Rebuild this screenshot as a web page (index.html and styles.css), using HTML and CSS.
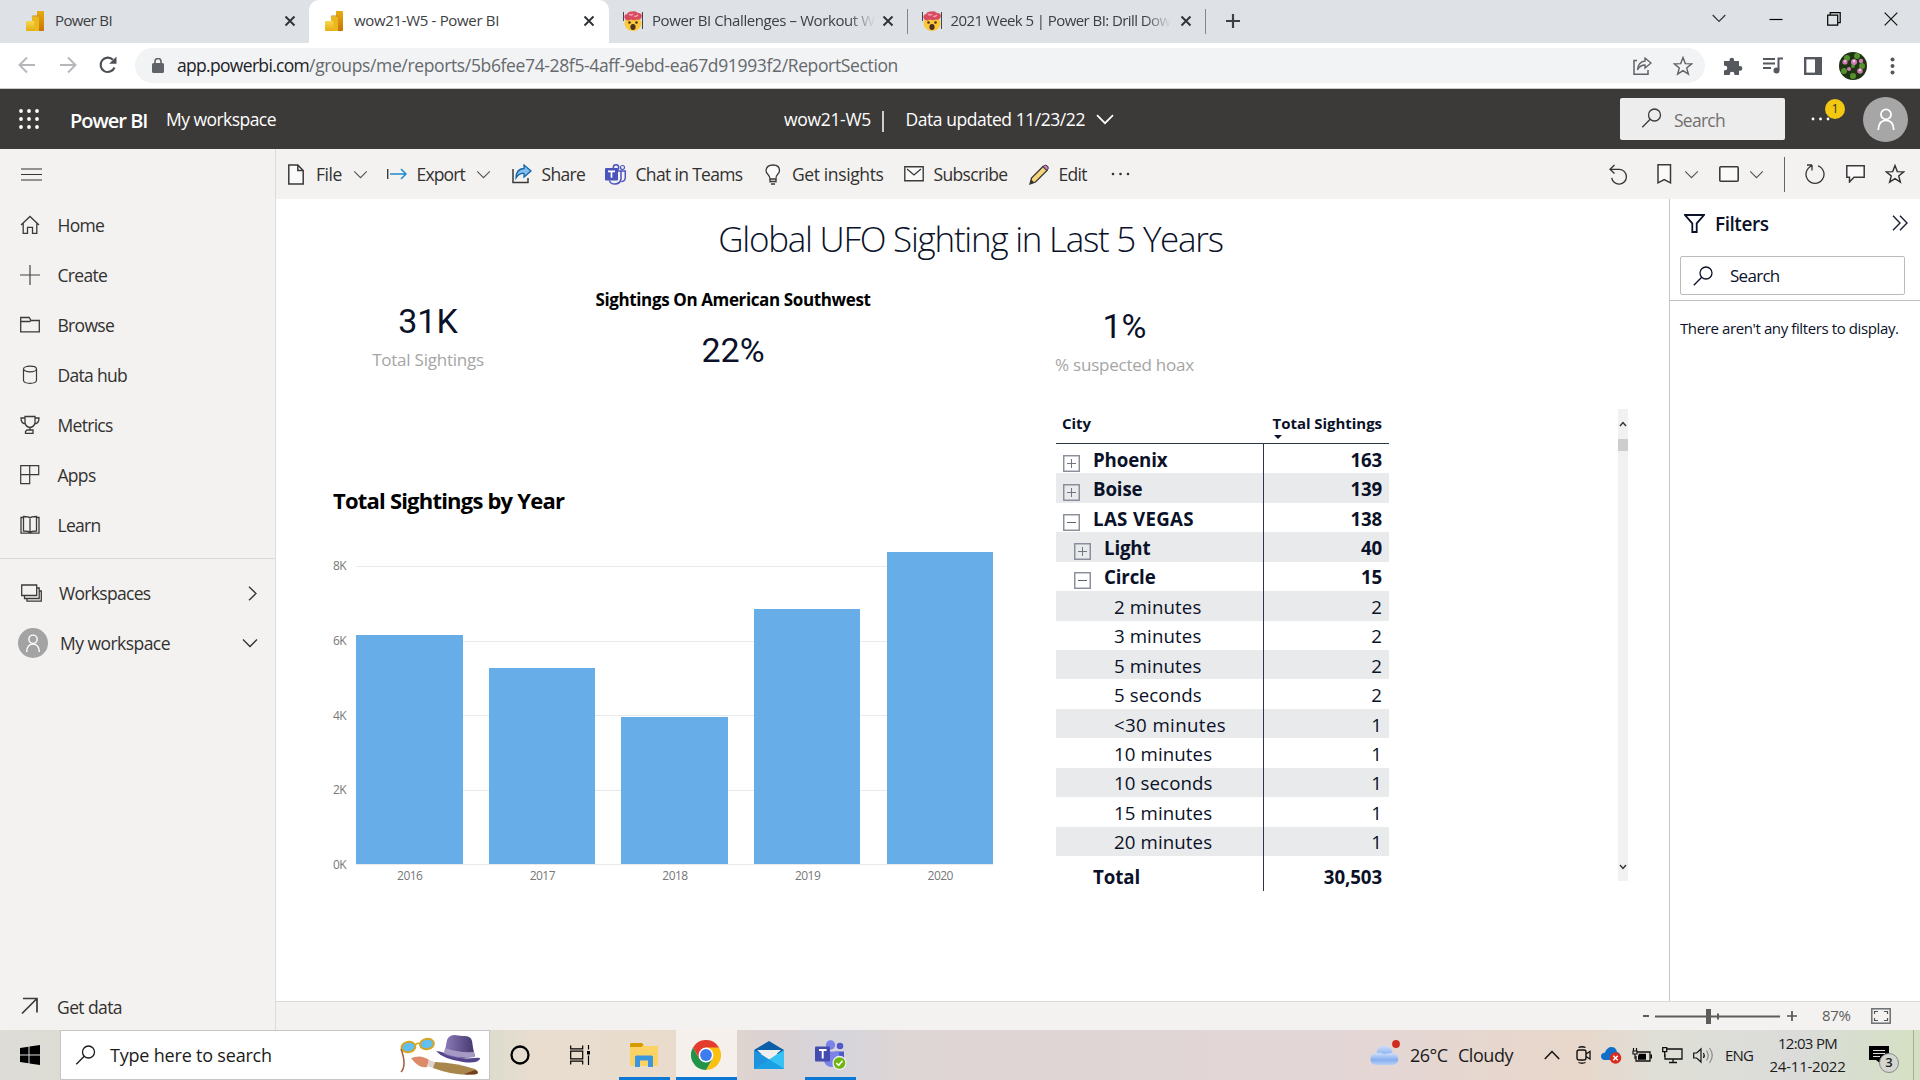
FILE: index.html
```html
<!DOCTYPE html>
<html lang="en">
<head>
<meta charset="utf-8">
<title>wow21-W5 - Power BI</title>
<link rel="stylesheet" href="styles.css">
</head>
<body>
<svg class="defs" width="0" height="0" aria-hidden="true">
  <defs>
    <linearGradient id="gold" x1="0" y1="0" x2="0" y2="1"><stop offset="0" stop-color="#e8ad10"/><stop offset="1" stop-color="#c8730a"/></linearGradient>
    <linearGradient id="gold2" x1="0" y1="0" x2="0" y2="1"><stop offset="0" stop-color="#f6d751"/><stop offset="1" stop-color="#e6ad10"/></linearGradient>
    <linearGradient id="hat" x1="0" y1="0" x2="1" y2="0"><stop offset="0" stop-color="#8d7cba"/><stop offset="1" stop-color="#43366d"/></linearGradient>
    <linearGradient id="cloudfill" x1="0" y1="0" x2="0" y2="1"><stop offset="0" stop-color="#cfe0fb"/><stop offset=".6" stop-color="#86aeee"/><stop offset="1" stop-color="#b9d2f8"/></linearGradient>
    <symbol id="pbi" viewBox="0 0 18 20"><path d="M11 0h6.200q.8 0 .8.800v18.400q0 .8-.8.800H11z" fill="url(#gold)"/><path d="M6 5.500h6.500q.5 0 .5.500v14H6z" fill="#e9b81c"/><path d="M6 5.500q0-.5.5-.5h6q.5 0 .5.500" fill="none" stroke="#c98a0e"/><path d="M0 11q0-1 1-1h6.500q1 0 1 1v9H1q-1 0-1-1z" fill="url(#gold2)"/></symbol>
    <symbol id="boom" viewBox="0 0 20 20"><path d="M.5 1v9M19.500 1v17" stroke="#444"/><ellipse cx="10" cy="12.500" rx="8.500" ry="7.500" fill="#fbc93a"/><path d="M2 8Q0 4 4 3Q5 0 9 .5Q13-.5 15 2Q20 2 18.500 6.500Q17 9.500 14 8.500Q11 10 8 8.500Q4 10.500 2 8z" fill="#d94b5e"/><path d="M6 3q2 2 4 0M11 5q2 1 4-1" fill="none" stroke="#f6a3b0" stroke-width="1.300"/><circle cx="6.500" cy="11.500" r="1.300" fill="#4d3021"/><circle cx="13.500" cy="11.500" r="1.300" fill="#4d3021"/><ellipse cx="10" cy="16" rx="2.600" ry="3" fill="#4d3021"/></symbol>
    <symbol id="close" viewBox="0 0 12 12"><path d="M1.500 1.500l9 9M10.500 1.500l-9 9" stroke="#2f3235" stroke-width="1.900"/></symbol>
    <symbol id="down" viewBox="0 0 16 10"><path d="M1 1.500l7 7 7-7" fill="none" stroke="currentColor" stroke-width="1.300"/></symbol>
    <symbol id="find" viewBox="0 0 20 20"><circle cx="13" cy="7" r="6" fill="none" stroke="currentColor" stroke-width="1.300"/><path d="M8.700 11.300L.8 19.200" stroke="currentColor" stroke-width="1.300"/></symbol>
    <symbol id="person" viewBox="0 0 20 24"><circle cx="10" cy="7" r="5.500" fill="none" stroke="#fff" stroke-width="1.900"/><path d="M1.500 24Q2 13.500 10 13.500T18.500 24" fill="none" stroke="#fff" stroke-width="1.900"/></symbol>
    <symbol id="star" viewBox="0 0 20 20"><path d="M10 1.500l2.300 6.100 6.400.3-5 4 1.700 6.300L10 14.600l-5.400 3.600 1.700-6.300-5-4 6.400-.3z" fill="none" stroke="currentColor" stroke-width="1.400"/></symbol>
    <symbol id="plusbox" viewBox="0 0 17 17"><rect x=".75" y=".75" width="15.500" height="15.500" fill="none" stroke="#858a98" stroke-width="1.400"/><path d="M4 8.500h9M8.500 4v9" stroke="#70757f"/></symbol>
    <symbol id="minusbox" viewBox="0 0 17 17"><rect x=".75" y=".75" width="15.500" height="15.500" fill="none" stroke="#858a98" stroke-width="1.400"/><path d="M4 8.500h9" stroke="#5c626e"/></symbol>
  </defs>
</svg>

<div class="screen">
  <header class="tabstrip">
    <div class="tab first"><svg class="fav" width="18" height="20"><use href="#pbi"/></svg><span class="t-pbi">Power BI</span><svg class="x" width="12" height="12"><use href="#close"/></svg></div>
    <div class="tab active"><svg class="fav" width="18" height="20"><use href="#pbi"/></svg><span class="t-wow">wow21-W5 - Power BI</span><svg class="x" width="12" height="12"><use href="#close"/></svg></div>
    <div class="tab idle"><svg class="fav" width="20" height="20"><use href="#boom"/></svg><span class="t-chal fade">Power BI Challenges – Workout W</span><svg class="x" width="12" height="12"><use href="#close"/></svg></div>
    <div class="tab idle"><svg class="fav" width="20" height="20"><use href="#boom"/></svg><span class="t-week fade">2021 Week 5 | Power BI: Drill Dow</span><svg class="x" width="12" height="12"><use href="#close"/></svg></div>
    <svg class="newtab" width="16" height="16" viewBox="0 0 16 16"><path d="M8 1v14M1 8h14" stroke="#3c4043" stroke-width="2.200"/></svg>
    <div class="window-controls">
      <svg width="14" height="9" viewBox="0 0 14 9"><path d="M.7 1L7 7.500 13.300 1" fill="none" stroke="#333" stroke-width="1.200"/></svg>
      <svg width="14" height="14" viewBox="0 0 14 14"><path d="M.5 7.500h13" stroke="#000" stroke-width="1.200"/></svg>
      <svg width="14" height="14" viewBox="0 0 14 14"><path d="M.7 3.200h10v10h-10zM3.200 3V.7h10v10H11" fill="none" stroke="#000" stroke-width="1.200"/></svg>
      <svg width="14" height="14" viewBox="0 0 14 14"><path d="M.7.7l12.600 12.600M13.300.7L.7 13.300" stroke="#111" stroke-width="1.200"/></svg>
    </div>
  </header>

  <div class="addressbar">
    <div class="navs">
      <svg width="18" height="18" viewBox="0 0 18 18"><path d="M17 9H2M9 1.500L1.500 9 9 16.500" fill="none" stroke="#b5b7ba" stroke-width="1.900"/></svg>
      <svg width="18" height="18" viewBox="0 0 18 18"><path d="M1 9h15M9 1.500L16.500 9 9 16.500" fill="none" stroke="#b5b7ba" stroke-width="1.900"/></svg>
      <svg width="18" height="18" viewBox="0 0 18 18"><path d="M15.500 11.500A7.200 7.200 0 1 1 14 3.800" fill="none" stroke="#4b4f53" stroke-width="2.100"/><path d="M17.500.5v7.300h-7.300z" fill="#4b4f53"/></svg>
    </div>
    <div class="omnibox">
      <svg class="lock" width="12" height="15" viewBox="0 0 12 15"><rect y="5" width="12" height="10" rx="1.500" fill="#5f6368"/><path d="M3 6V3.500a3 3 0 0 1 6 0V6" fill="none" stroke="#5f6368" stroke-width="1.600"/></svg>
      <span class="url"><b>app.powerbi.com</b>/groups/me/reports/5b6fee74-28f5-4aff-9ebd-ea67d91993f2/ReportSection</span>
      <svg class="page-share" width="19" height="18" viewBox="0 0 19 18"><path d="M4 3.500H1v13.700h14V13" fill="none" stroke="#5f6368" stroke-width="1.500"/><path d="M12 1l6 5-6 5V8Q7 8 4.500 13Q5 5 12 4z" fill="none" stroke="#5f6368" stroke-width="1.300"/></svg>
      <svg class="page-star" width="20" height="20"><use href="#star"/></svg>
    </div>
    <div class="extensions">
      <svg width="20" height="20" viewBox="0 0 20 20"><path d="M1 5h5.500V4a2.300 2.300 0 0 1 4.600 0v1H16v5h1a2.400 2.400 0 0 1 0 4.800h-1V19h-4.600v-1a2.300 2.300 0 0 0-4.600 0v1H1v-4.700h1a2.300 2.300 0 0 0 0-4.600H1z" fill="#55595e"/></svg>
      <svg width="20" height="18" viewBox="0 0 20 18"><path d="M0 2h12M0 6.500h12M0 11h8" stroke="#55595e" stroke-width="1.900"/><path d="M15.500 13V1.500H20" fill="none" stroke="#55595e" stroke-width="2"/><circle cx="13.500" cy="13.500" r="3" fill="#55595e"/></svg>
      <svg width="18" height="18" viewBox="0 0 18 18"><rect x="1.200" y="1.200" width="15.600" height="15.600" fill="#fff" stroke="#55595e" stroke-width="2.400"/><path d="M11 1h6v16h-6z" fill="#55595e"/></svg>
      <svg class="profile" width="28" height="28" viewBox="0 0 28 28"><circle cx="14" cy="14" r="14" fill="#1d3312"/><g fill="#55902f"><circle cx="8" cy="6" r="3"/><circle cx="18" cy="4" r="3"/><circle cx="23" cy="14" r="3"/><circle cx="5" cy="19" r="3"/><circle cx="14" cy="24" r="3"/><circle cx="14" cy="14" r="2"/></g><g fill="#d27ab8"><circle cx="6" cy="10" r="2.600"/><circle cx="15" cy="10" r="3"/><circle cx="22" cy="9" r="2.200"/><circle cx="10" cy="17" r="2"/><circle cx="21" cy="19" r="2.800"/></g><g fill="#f2cfe8"><circle cx="15" cy="9" r="1.200"/><circle cx="6" cy="9" r="1"/><circle cx="21" cy="18" r="1.200"/></g></svg>
      <svg width="5" height="18" viewBox="0 0 5 18"><g fill="#55595e"><circle cx="2.500" cy="2.500" r="2"/><circle cx="2.500" cy="9" r="2"/><circle cx="2.500" cy="15.500" r="2"/></g></svg>
    </div>
  </div>

  <div class="appbar">
    <svg class="waffle" width="20" height="20" viewBox="0 0 20 20"><g fill="#fff"><circle cx="2" cy="2" r="1.900"/><circle cx="10" cy="2" r="1.900"/><circle cx="18" cy="2" r="1.900"/><circle cx="2" cy="10" r="1.900"/><circle cx="10" cy="10" r="1.900"/><circle cx="18" cy="10" r="1.900"/><circle cx="2" cy="18" r="1.900"/><circle cx="10" cy="18" r="1.900"/><circle cx="18" cy="18" r="1.900"/></g></svg>
    <span class="brand">Power BI</span>
    <span class="crumb">My workspace</span>
    <span class="report-name">wow21-W5</span>
    <i class="pipe"></i>
    <span class="updated">Data updated 11/23/22</span>
    <svg class="updated-chev" width="18" height="11" viewBox="0 0 18 11"><path d="M1 1.200l8 8 8-8" fill="none" stroke="#fff" stroke-width="1.700"/></svg>
    <div class="app-search"><svg width="21" height="20"><use href="#find"/></svg><span>Search</span></div>
    <div class="more"><svg width="19" height="4" viewBox="0 0 19 4"><g fill="#fff"><circle cx="2" cy="2" r="1.400"/><circle cx="9.500" cy="2" r="1.400"/><circle cx="17" cy="2" r="1.400"/></g></svg><em>1</em></div>
    <div class="avatar"><svg width="20" height="22"><use href="#person"/></svg></div>
  </div>

  <div class="workarea">
    <nav class="sidebar">
      <svg class="burger" width="21" height="13" viewBox="0 0 21 13"><path d="M0 1h21M0 6.500h21M0 12h21" stroke="#333" stroke-width="1.100"/></svg>
      <ul>
        <li><svg width="20" height="20" viewBox="0 0 20 20"><path d="M1 10l9-8.500L19 10M3.200 8.500v9.800h4.300v-6h5v6h4.300V8.500" fill="none" stroke="#3b3a39" stroke-width="1.300"/></svg>Home</li>
        <li><svg width="20" height="20" viewBox="0 0 20 20"><path d="M0 10h20M10 0v20" stroke="#444" stroke-width="1.200"/></svg>Create</li>
        <li><svg width="20" height="20" viewBox="0 0 20 20"><path d="M.7 2.500h8.500l1.800 3h8.300v11.300H.7zM.7 6.500h9L11 5.500" fill="none" stroke="#3b3a39" stroke-width="1.300"/></svg>Browse</li>
        <li><svg width="20" height="20" viewBox="0 0 20 20"><ellipse cx="10" cy="4" rx="6.500" ry="2.800" fill="none" stroke="#3b3a39" stroke-width="1.200"/><path d="M3.500 4v11.500Q4 18.300 10 18.300t6.500-2.800V4" fill="none" stroke="#3b3a39" stroke-width="1.200"/></svg>Data hub</li>
        <li><svg width="20" height="20" viewBox="0 0 20 20"><path d="M5 1.500h10V8q-1 4-5 4.500Q6 12 5 8zM5 3H1q0 5.500 4.500 6M15 3h4q0 5.500-4.500 6M10 12.500v2.500M7 15h6v3.300H5.500V16.500z" fill="none" stroke="#3b3a39" stroke-width="1.300"/></svg>Metrics</li>
        <li><svg width="20" height="20" viewBox="0 0 20 20"><path d="M.7.700h18v9H.7zM9.700.700v18h-9v-9" fill="none" stroke="#3b3a39" stroke-width="1.200"/></svg>Apps</li>
        <li><svg width="20" height="20" viewBox="0 0 20 20"><path d="M3.500 2.500H1v15.700h18V2.500h-2.500M10 3.500v13M10 3Q9 1.500 3.500 1.500V16Q9 16 10 17.500M10 3q1-1.500 6.500-1.500V16Q11 16 10 17.500" fill="none" stroke="#3b3a39" stroke-width="1.300"/></svg>Learn</li>
      </ul>
      <div class="spaces">
        <div class="space ws"><svg width="21" height="18" viewBox="0 0 21 18"><path d="M.7 1h15v10.500H.7zM3.500 12v2.500h14.700V4H16M6 15v2.200h14.300V7H18.500" fill="none" stroke="#3b3a39" stroke-width="1.300"/></svg><span>Workspaces</span><svg width="9" height="15" viewBox="0 0 9 15"><path d="M1 .8l7 6.700-7 6.700" fill="none" stroke="#333" stroke-width="1.300"/></svg></div>
        <div class="space mine"><div class="me"><svg width="16" height="18"><use href="#person"/></svg></div><span>My workspace</span><svg width="16" height="10"><use href="#down"/></svg></div>
      </div>
      <div class="getdata"><svg width="18" height="18" viewBox="0 0 18 18"><path d="M1 16.500L16 1.500M2 1.500h14v14" fill="none" stroke="#3b3a39" stroke-width="1.700"/></svg>Get data</div>
    </nav>

    <main class="main">
      <div class="commands">
        <div><svg width="16" height="21" viewBox="0 0 16 21"><path d="M.8 1h9l5.400 5.500V20H.8zM9.800 1v5.500h5.400" fill="#fafafa" stroke="#3b3a39" stroke-width="1.500"/></svg><span>File</span><svg class="chev" width="15" height="9"><use href="#down"/></svg></div>
        <div><svg width="20" height="12" viewBox="0 0 20 12"><path d="M.7 1v10" stroke="#3b3a39" stroke-width="1.400"/><path d="M3 6h16M14 1l5 5-5 5" fill="none" stroke="#1e8bcd" stroke-width="1.500"/></svg><span class="w-export">Export</span><svg class="chev" width="15" height="9"><use href="#down"/></svg></div>
        <div><svg width="20" height="20" viewBox="0 0 20 20"><path d="M1 5v13.500h15V14" fill="none" stroke="#3b3a39" stroke-width="1.500"/><path d="M12 1l7 6-7 6V9.500Q7 9 4 14Q4 5 12 4.500z" fill="#83beec" stroke="#1065ab" stroke-width="1.300"/></svg><span>Share</span></div>
        <div><svg width="21" height="21" viewBox="0 0 21 21"><circle cx="11" cy="3.500" r="2.700" fill="none" stroke="#4b53bc" stroke-width="1.500"/><circle cx="17.500" cy="3.500" r="2" fill="none" stroke="#4b53bc" stroke-width="1.200"/><path d="M12 7h8.300v7q-.5 3.500-4 3.500M16 7v8q-1 5-6 5t-5.500-3.500" fill="none" stroke="#4b53bc" stroke-width="1.500"/><rect y="4" width="13" height="12.500" rx="1" fill="#4b53bc"/><path d="M3 7.300h7M6.500 7.300v6.500" stroke="#fff" stroke-width="1.700"/></svg><span class="w-chat">Chat in Teams</span></div>
        <div><svg width="16" height="21" viewBox="0 0 16 21"><path d="M5 15q0-2.500-2-4.500Q1 8.500 1 6.500Q1.500 1 8 1t6.500 5.500q0 2-2 4T11 15z" fill="#fafafa" stroke="#3b3a39" stroke-width="1.300"/><path d="M5 17.500h6M6 20h4M5 15v3.500M11 15v3.500" stroke="#3b3a39" stroke-width="1.300"/></svg><span>Get insights</span></div>
        <div><svg width="20" height="16" viewBox="0 0 20 16"><path d="M.8.800h18.400v14H.8z" fill="#fafafa" stroke="#3b3a39" stroke-width="1.400"/><path d="M3 3l7 6 7-6" fill="none" stroke="#3b3a39" stroke-width="1.300"/></svg><span>Subscribe</span></div>
        <div><svg width="20" height="21" viewBox="0 0 20 21"><path d="M1 20l1.500-6L14 2.500l4 4L6.500 18z" fill="#f4d47c" stroke="#3b3a39" stroke-width="1.300"/><path d="M14 2.500q2.500-2.500 4.500-.5t-.5 4.500z" fill="#c77fc8" stroke="#3b3a39"/><path d="M1 20l1-4.500 3.500 3z" fill="#333"/></svg><span>Edit</span></div>
        <div><svg width="19" height="4" viewBox="0 0 19 4"><g fill="#333"><circle cx="2" cy="2" r="1.300"/><circle cx="9.500" cy="2" r="1.300"/><circle cx="17" cy="2" r="1.300"/></g></svg></div>
        <div><svg width="20" height="21" viewBox="0 0 20 21"><path d="M5.500 1L1 5.300l4.500 4.200M1 5.300h9.500a7.400 7.400 0 1 1-7.800 8.500" fill="none" stroke="#333" stroke-width="1.300"/></svg></div>
        <div><svg width="15" height="20" viewBox="0 0 15 20"><path d="M1 .8h12.500v18L7.200 15.500 1 18.800z" fill="#fafafa" stroke="#3b3a39" stroke-width="1.500"/></svg><svg class="chev-r" width="15" height="9"><use href="#down"/></svg></div>
        <div><svg width="20" height="16" viewBox="0 0 20 16"><rect x=".8" y=".8" width="18.400" height="14.400" rx="1" fill="#fafafa" stroke="#3b3a39" stroke-width="1.600"/></svg><svg class="chev-v" width="15" height="9"><use href="#down"/></svg></div>
        <div><i class="bar-sep"></i></div>
        <div><svg width="20" height="21" viewBox="0 0 20 21"><path d="M7 1v5.500M7 1H2M7 1.800a9 9 0 1 0 6 0" fill="none" stroke="#333" stroke-width="1.300"/></svg></div>
        <div><svg width="19" height="18" viewBox="0 0 19 18"><path d="M.8.800h17.400v11.500H8L3.500 17v-4.700H.8z" fill="#fafafa" stroke="#3b3a39" stroke-width="1.500"/></svg></div>
        <div><svg width="20" height="20"><use href="#star"/></svg></div>
      </div>

      <div class="content">
        <section class="report">
          <h1>Global UFO Sighting in Last 5 Years</h1>
          <div class="kpis">
            <div class="kpi total"><strong>31K</strong><span>Total Sightings</span></div>
            <div class="kpi southwest"><h2>Sightings On American Southwest</h2><strong>22%</strong></div>
            <div class="kpi hoax"><strong>1%</strong><span>% suspected hoax</span></div>
          </div>
          <div class="visuals">
            <div class="chart">
              <h2>Total Sightings by Year</h2>
              <div class="plot">
                <div class="yaxis"><span>8K</span><span>6K</span><span>4K</span><span>2K</span><span>0K</span></div>
                <div class="lines"><i></i><i></i><i></i><i></i><i></i></div>
                <div class="bars"><i style="height:229px"></i><i style="height:196px"></i><i style="height:147px"></i><i style="height:255px"></i><i style="height:312px"></i></div>
              </div>
              <div class="xaxis"><span>2016</span><span>2017</span><span>2018</span><span>2019</span><span>2020</span></div>
            </div>
            <div class="matrix">
              <div class="mhead"><span>City</span><div><span class="h-total">Total Sightings</span><i class="sort"></i></div></div>
              <div class="mrows">
                <div class="l1"><svg width="17" height="17"><use href="#plusbox"/></svg><span>Phoenix</span><b>163</b></div>
                <div class="l1"><svg width="17" height="17"><use href="#plusbox"/></svg><span>Boise</span><b>139</b></div>
                <div class="l1"><svg width="17" height="17"><use href="#minusbox"/></svg><span class="vegas">LAS VEGAS</span><b>138</b></div>
                <div class="l2"><svg width="17" height="17"><use href="#plusbox"/></svg><span>Light</span><b>40</b></div>
                <div class="l2"><svg width="17" height="17"><use href="#minusbox"/></svg><span>Circle</span><b>15</b></div>
                <div class="l3"><span>2 minutes</span><b>2</b></div>
                <div class="l3"><span>3 minutes</span><b>2</b></div>
                <div class="l3"><span>5 minutes</span><b>2</b></div>
                <div class="l3"><span>5 seconds</span><b>2</b></div>
                <div class="l3"><span class="under30">&lt;30 minutes</span><b>1</b></div>
                <div class="l3"><span>10 minutes</span><b>1</b></div>
                <div class="l3"><span>10 seconds</span><b>1</b></div>
                <div class="l3"><span>15 minutes</span><b>1</b></div>
                <div class="l3"><span>20 minutes</span><b>1</b></div>
              </div>
              <div class="mtotal"><span>Total</span><b>30,503</b></div>
            </div>
            <div class="scroll">
              <svg width="8" height="6" viewBox="0 0 8 6"><path d="M1 5l3-3.500L7 5" fill="none" stroke="#333" stroke-width="1.400"/></svg>
              <i></i>
              <svg class="dn" width="8" height="6" viewBox="0 0 8 6"><path d="M1 1l3 3.500L7 1" fill="none" stroke="#333" stroke-width="1.400"/></svg>
            </div>
          </div>
        </section>
        <aside class="filters">
          <div class="fhead"><svg width="21" height="19" viewBox="0 0 21 19"><path d="M1 1h19l-7.300 8.300V18H8.300V9.300z" fill="none" stroke="#0a1128" stroke-width="1.800"/></svg><span>Filters</span><svg class="collapse" width="16" height="16" viewBox="0 0 16 16"><path d="M1 .7L8 8l-7 7.300M8 .7L15 8l-7 7.300" fill="none" stroke="#1a2036" stroke-width="1.400"/></svg></div>
          <div class="fsearch"><svg width="20" height="20"><use href="#find"/></svg><span>Search</span></div>
          <p>There aren't any filters to display.</p>
        </aside>
      </div>

      <div class="zoombar">
        <i class="minus"></i>
        <svg width="125" height="15" viewBox="0 0 125 15"><path d="M0 7.500h125" stroke="#5e5c5a" stroke-width="2"/><path d="M53.500 0v15" stroke="#5e5c5a" stroke-width="5"/><path d="M63 4.500v6" stroke="#5e5c5a" stroke-width="2"/></svg>
        <svg class="plus" width="10" height="10" viewBox="0 0 10 10"><path d="M5 0v10M0 5h10" stroke="#555" stroke-width="1.700"/></svg>
        <span>87%</span>
        <svg class="fit" width="20" height="16" viewBox="0 0 20 16"><rect x=".8" y=".8" width="18.400" height="14.400" fill="none" stroke="#6a6f72" stroke-width="1.500"/><path d="M3.500 6V3.500H7M13 3.500h3.500V6M3.500 10v2.500H7M13 12.500h3.500V10" fill="none" stroke="#555" stroke-width="1.200"/></svg>
      </div>
    </main>
  </div>

  <footer class="taskbar">
    <div class="start"><svg width="20" height="20" viewBox="0 0 20 20"><path d="M0 3l8.500-1.200v7.700H0zM9.500 1.600L20 0v9.500H9.500zM0 10.500h8.500v7.700L0 17zM9.500 10.500H20V20L9.500 18.400z"/></svg></div>
    <div class="tsearch">
      <svg width="21" height="20"><use href="#find"/></svg><span>Type here to search</span>
      <svg width="82" height="42" viewBox="0 0 82 42"><ellipse cx="9.500" cy="13" rx="7" ry="5.200" fill="#62bff0" stroke="#d9a41e" stroke-width="1.900" transform="rotate(-10 9.500 13)"/><ellipse cx="28" cy="10" rx="7" ry="5.200" fill="#62bff0" stroke="#d9a41e" stroke-width="1.900" transform="rotate(-10 28 10)"/><path d="M16 11q3-3 5-1" fill="none" stroke="#d9a41e" stroke-width="1.500"/><path d="M2 15q3 8 3 14t-3 9" fill="none" stroke="#a85a35" stroke-width="1.500"/><path d="M37 17q3 0 9 2 13 7 29 5 7-1 6 1-3 5-17 3-20-3-27-11z" fill="#55458a"/><path d="M45 20Q47 12 48 6Q50 1 56 1q5 1 9 1 7 0 8 5 1 9 3 15-15 5-31-2z" fill="url(#hat)"/><path d="M46 14q13 5 29 4l1 5q-17 2-31-4z" fill="#a69ac4"/><path d="M12 24q10-4 18 2l-2 7q-8 2-16-9z" fill="#dc8a69"/><path d="M30 26l6 2-2 6-6-2z" fill="#ddd3cc"/><path d="M36 28q22 1 40 7 5 3 2 5-20 3-44-6z" fill="#a9874c"/><path d="M65 40q6-2 11-4 4 2 2 4-6 1-13 0z" fill="#744022"/></svg>
    </div>
    <div class="tb cortana"><svg width="20" height="20" viewBox="0 0 20 20"><circle cx="10" cy="10" r="8.500" fill="none" stroke="#000" stroke-width="2.300"/></svg></div>
    <div class="tb taskview"><svg width="20" height="20" viewBox="0 0 20 20"><path d="M.7.500v3.300h12V.5M.7 19.500v-3.300h12v3.300M.7 6.200h12v7.600H.7zM18.500 0v4.500M18.500 10.500V20" fill="none" stroke="#000" stroke-width="1.200"/><path d="M17 6h3v3.500h-3z"/></svg></div>
    <div class="tb open explorer"><svg width="28" height="24" viewBox="0 0 28 24"><path d="M0 1.500Q0 0 1.500 0H12l2 3H28v18.500q0 1.500-1.500 1.500h-25Q0 23 0 21.500z" fill="#fdd265"/><path d="M0 4V1.500Q0 0 1.500 0H12l1.500 2-2 2z" fill="#d99a00"/><path d="M5 24V14q0-1.500 1.500-1.500h15Q23 12.500 23 14v10h-5v-6.500h-8V24z" fill="#3c96dd"/></svg></div>
    <div class="tb open browser"><svg width="30" height="30" viewBox="0 0 30 30"><path d="M15 15L2 7.500A15 15 0 0 1 28 7.500z" fill="#e33b2e"/><path d="M15 7.500h13A15 15 0 0 1 15 30l6.500-11z" fill="#fcc011"/><path d="M2 7.500A15 15 0 0 0 15 30l6.500-11.300H8.500z" fill="#239447"/><path d="M2 7.500h26H15L8.500 18.700z" fill="#e33b2e"/><circle cx="15" cy="15" r="7.400" fill="#fff"/><circle cx="15" cy="15" r="5.900" fill="#3c7cef"/></svg></div>
    <div class="tb mail"><svg width="30" height="28" viewBox="0 0 30 28"><path d="M0 9L15 0l15 9v4H0z" fill="#0a5fa8"/><path d="M3 9h24l-12 11z" fill="#efefef"/><path d="M0 9l15 9.500L30 9v19H0z" fill="#36c2f3"/><path d="M0 9l30 19H0z" fill="#1d93de"/><path d="M0 28l15-9.500L30 28z" fill="#1aa6ea" opacity=".6"/></svg></div>
    <div class="tb open teams"><svg width="32" height="30" viewBox="0 0 32 30"><circle cx="15.500" cy="5" r="4.700" fill="#7b83eb"/><circle cx="25" cy="6" r="3.300" fill="#5059c9"/><path d="M20 11.500h9v9q-1 4-7 4z" fill="#5059c9"/><path d="M9 11.500h15v9q-1 6.500-7.500 6.500T9 20.500z" fill="#7b83eb"/><rect y="6.500" width="15" height="15" rx="1" fill="#444cb0"/><path d="M4 10h7.500M7.700 10v8.500" stroke="#fff" stroke-width="1.900"/><circle cx="24.500" cy="23" r="6.500" fill="#6fb70f" stroke="#eee" stroke-width="1.300"/><path d="M21.300 23l2.300 2.300 4-4.600" fill="none" stroke="#fff" stroke-width="1.600"/></svg></div>
    <div class="weather"><svg width="31" height="25" viewBox="0 0 31 25"><g fill="url(#cloudfill)"><circle cx="14.500" cy="13.500" r="8"/><path d="M6 25a6 6 0 0 1-1-11.800Q9 12 14 14l7-1a6.200 6.200 0 0 1 3 12z"/></g><circle cx="26" cy="4" r="3.900" fill="#ce2a1e"/></svg><span class="temp">26°C</span><span class="cloudy">Cloudy</span></div>
    <div class="tray">
      <svg width="16" height="10" viewBox="0 0 16 10"><path d="M.8 9L8 1.500 15.200 9" fill="none" stroke="#111" stroke-width="1.500"/></svg>
      <svg width="15" height="18" viewBox="0 0 15 18"><rect x="1" y="4" width="9" height="10" rx="2" fill="none" stroke="#111" stroke-width="1.400"/><path d="M10 8l4-2.500v7.500l-4-2.500M2.500 1.500Q6 0 9.500 1.500M2.500 16.500Q6 18 9.500 16.500" fill="none" stroke="#111" stroke-width="1.300"/></svg>
      <svg width="21" height="17" viewBox="0 0 21 17"><path d="M3 13q-3-1-3-4t4-3.500Q6 0 10.500 0T16 5q3 .5 3 4 0 4-4 4z" fill="#126fc9"/><circle cx="14.500" cy="11" r="5.800" fill="#d62d20"/><path d="M12.300 8.800l4.400 4.400M16.700 8.800l-4.400 4.400" stroke="#fff" stroke-width="1.500"/></svg>
      <svg width="20" height="15" viewBox="0 0 20 15"><path d="M5 4h13v9H4V8" fill="none" stroke="#111" stroke-width="1.300"/><path d="M7 5.700h7v6H6V8zM18.500 6.500H20v4h-1.500z"/><path d="M1 3h4v3H1zM1.500 0v3M4.500 0v3M3 6v5" fill="none" stroke="#111" stroke-width="1.200"/></svg>
      <svg width="21" height="17" viewBox="0 0 21 17"><path d="M5 2h15v10H3V7M11 12v3M7 15.500h8M.7.700h4v4h-4zM2.700 5v5" fill="none" stroke="#111" stroke-width="1.300"/></svg>
      <svg width="21" height="17" viewBox="0 0 21 17"><path d="M.7 6h3L8 2v13l-4.300-4h-3z" fill="none" stroke="#111" stroke-width="1.200"/><path d="M10.500 6q1.500 2.500 0 5" fill="none" stroke="#111" stroke-width="1.200"/><path d="M13.500 3.500q3.500 5 0 10M16.500 1q5.500 7.500 0 15" fill="none" stroke="#888" stroke-width="1.200"/></svg>
    </div>
    <span class="lang">ENG</span>
    <div class="clock"><span class="time">12:03 PM</span><span>24-11-2022</span></div>
    <div class="notify"><svg width="21" height="18" viewBox="0 0 21 18"><path d="M0 0h20v14h-8v4l-5-4H0z"/><path d="M4 4.500h12M4 7.500h12M4 10.500h7" stroke="#ddd" stroke-width="1.200"/></svg><em>3</em></div>
    <i class="peek"></i>
  </footer>
</div>
</body>
</html>
```
FILE: styles.css
```css
* { box-sizing: border-box; }
body { margin: 0; background: #fff; color: #323130; font-family: "Open Sans", "Noto Sans", sans-serif; font-size: 17.5px; }
svg { display: block; flex: none; }
svg.defs { position: absolute; }
h1, h2, p, ul { margin: 0; padding: 0; }
i, em { font-style: normal; }
span { white-space: nowrap; flex: none; }

.screen { width: 1920px; height: 1080px; display: flex; flex-direction: column; overflow: hidden; }

/* browser tabs */
.tabstrip { height: 43px; flex: none; background: #dee1e6; display: flex; align-items: center; font-size: 15px; color: #3c4043; }
.tab { height: 43px; display: flex; align-items: center; flex: none; padding-bottom: 2px; }
.tab .fav { margin-right: 11px; }
.tab .x { margin-left: auto; }
.tab span { margin-top: -2px; }
.first { width: 309px; padding-left: 26px; padding-right: 13px; border-bottom-right-radius: 10px; }
.active { width: 300px; padding-left: 16px; padding-right: 14px; background: #fff; border-radius: 10px 10px 0 0; }
.idle { width: 298.500px; padding-left: 14px; padding-right: 14px; position: relative; }
.idle .fav { margin-right: 9px; }
.idle::after { content: ""; position: absolute; right: 0; top: 9px; width: 1px; height: 25px; background: #84878c; }
.fade { -webkit-mask-image: linear-gradient(90deg, #000 88%, transparent); mask-image: linear-gradient(90deg, #000 88%, transparent); }
.t-pbi { letter-spacing: -.042em; }
.t-wow { letter-spacing: -.022em; }
.t-chal { letter-spacing: -.027em; }
.t-week { letter-spacing: -.038em; }
.newtab { margin-left: 19px; margin-top: -1px; }
.window-controls { margin-left: auto; margin-right: 22px; margin-top: -6px; display: flex; align-items: center; gap: 43.500px; }

/* address bar */
.addressbar { height: 46px; flex: none; border-bottom: 1px solid #c9cacb; display: flex; align-items: center; }
.navs { width: 135px; padding-left: 18px; display: flex; gap: 22.500px; margin-top: -1px; }
.omnibox { width: 1570px; height: 35px; border-radius: 18px; background: #f1f3f4; display: flex; align-items: center; padding: 0 12px 0 17px; color: #5f6368; }
.lock { margin-right: 13px; }
.url { letter-spacing: -.0205em; color: #66696d; margin-top: -1px; }
.url b { font-weight: 400; color: #202124; letter-spacing: -.039em; }
.page-share { margin-left: auto; margin-right: 21px; }
.extensions { display: flex; align-items: center; flex: 1; padding: 0 25px 0 18px; justify-content: space-between; }
.profile { margin: 0 3px 0 -3px; }

/* product header */
.appbar { height: 60px; flex: none; background: #3b3a38; color: #fff; display: flex; align-items: center; }
.waffle { margin-left: 19px; }
.brand { margin-left: 31px; width: 96px; font-size: 20px; font-weight: 600; letter-spacing: -.05em; padding-top: 3px; }
.crumb { width: 618px; letter-spacing: -.031em; }
.report-name { width: 98px; letter-spacing: -.018em; }
.pipe { width: 1.500px; height: 21px; background: #ccc; margin-top: 4px; }
.updated { margin-left: 22px; width: 190px; letter-spacing: -.026em; }
.app-search { margin-left: auto; width: 165px; height: 42px; border-radius: 2px; background: #eeeded; color: #3b3a39; display: flex; align-items: center; padding-left: 21px; gap: 12px; }
.app-search svg { margin-top: -2px; }
.app-search span { color: #72706e; letter-spacing: -.042em; padding-top: 2px; }
.more { margin-left: 26px; width: 52px; position: relative; }
.more em { position: absolute; left: 14px; top: -18px; width: 20px; height: 20px; border-radius: 50%; background: #f2c811; color: #333; font-size: 12.500px; line-height: 20px; text-align: center; }
.avatar { width: 45px; height: 45px; border-radius: 50%; background: #a6a6a6; display: flex; align-items: center; justify-content: center; margin-right: 12px; }

.workarea { flex: 1; min-height: 0; display: flex; }

/* left navigation */
.sidebar { width: 276px; flex: none; background: #f3f2f1; border-right: 1px solid #dddbd9; display: flex; flex-direction: column; }
.burger { margin: 19px 0 20px 21px; }
.sidebar ul { list-style: none; height: 358px; border-bottom: 1px solid #dddbd9; }
.sidebar li { height: 50px; display: flex; align-items: center; padding: 0 0 2px 20px; gap: 17.500px; letter-spacing: -.04em; }
.spaces { padding-top: 9px; }
.space { height: 50px; display: flex; align-items: center; padding-right: 17px; letter-spacing: -.039em; }
.space > svg:last-child { margin-left: auto; }
.ws { padding-left: 21px; gap: 17px; }
.mine { padding-left: 18px; gap: 12px; letter-spacing: -.031em; }
.ws > svg:last-child { margin-right: 1px; }
.me { width: 30px; height: 30px; border-radius: 50%; background: #a3a3a3; display: flex; align-items: center; justify-content: center; }
.getdata { margin-top: auto; height: 46px; display: flex; align-items: center; padding-left: 21px; gap: 18px; letter-spacing: -.034em; }
.getdata svg { margin-top: -3px; }

.main { flex: 1; min-width: 0; display: flex; flex-direction: column; }

/* command bar */
.commands { height: 50px; flex: none; background: #f3f2f1; padding-left: 12px; display: grid; align-items: center; grid-template-columns: 99px 125px 93px 160px 139px 125px 82px 498px 48px 62px 65px 21px 41px 39px 35px; letter-spacing: -.038em; }
.commands > div { display: flex; align-items: center; }
.commands span { margin-left: 9.500px; }
.commands > div:first-child span { margin-left: 12px; letter-spacing: -.024em; }
.commands > div:nth-child(5) span { margin-left: 11px; letter-spacing: -.022em; }
.commands .w-export { letter-spacing: -.048em; }
.chev { margin-left: 11px; color: #555; }
.chev-r { margin-left: 12px; color: #555; }
.chev-v { margin-left: 10px; color: #555; }
.bar-sep { width: 1px; height: 35px; background: #666; }

.content { flex: 1; min-height: 0; display: flex; }

/* report canvas */
.report { flex: 1; min-width: 0; color: #0a1128; }
.report h1 { height: 78px; text-align: center; font-size: 35px; line-height: 80px; font-weight: 350; letter-spacing: -.036em; padding-right: 4px; white-space: nowrap; }
.kpis { height: 132px; display: grid; grid-template-columns: 304px 306px 477px; }
.kpi { display: flex; flex-direction: column; align-items: center; }
.kpi strong { font-family: Roboto, sans-serif; font-weight: 400; font-size: 34px; line-height: 40px; }
.kpi span { font-size: 17px; line-height: 24px; color: #a5a5a5; letter-spacing: -.014em; }
.total { padding-top: 24px; }
.total span, .hoax span { margin-top: 7px; }
.southwest { padding-top: 11px; }
.southwest h2 { font-size: 17px; line-height: 24px; font-weight: 700; color: #000; letter-spacing: -.022em; white-space: nowrap; }
.southwest strong { margin-top: 18px; }
.hoax { padding-top: 29px; }

/* chart and matrix */
.visuals { display: grid; grid-template-columns: 724px 333px 10px; padding-left: 56px; }
.chart { padding-top: 76px; }
.chart h2 { padding-left: 1px; font-size: 22px; line-height: 30px; font-weight: 700; color: #000; letter-spacing: -.036em; }
.plot { margin-top: 36px; display: grid; grid-template-columns: 24px 637px; height: 313px; }
.yaxis { display: flex; flex-direction: column; justify-content: space-between; margin-top: 7px; margin-bottom: -9px; padding-left: 1px; }
.yaxis span, .xaxis span { font-size: 12px; line-height: 16px; color: #777; letter-spacing: -.045em; }
.lines { grid-column: 2; grid-row: 1; display: flex; flex-direction: column; justify-content: space-between; padding-top: 15px; margin-bottom: -1px; }
.lines i { height: 1px; background: #e9e9e9; }
.bars { grid-column: 2; grid-row: 1; display: flex; justify-content: space-between; align-items: flex-end; z-index: 1; }
.bars i { width: 106.500px; background: #67ade8; }
.xaxis { margin: 4px 0 0 24px; width: 637px; display: flex; justify-content: space-between; }
.xaxis span { width: 106.500px; padding-left: 1px; text-align: center; }

.matrix { width: 333px; font-size: 18.700px; background: linear-gradient(#2c3648, #2c3648) 207px 34px / 1px 448px no-repeat; }
.mhead { height: 35px; border-bottom: 1px solid #2c3648; padding: 2px 7px 0 6px; display: flex; justify-content: space-between; font-size: 15px; line-height: 24px; font-weight: 700; letter-spacing: -.003em; }
.sort { display: block; width: 0; height: 0; border: 4.500px solid transparent; border-top: 4.500px solid #0a1128; border-bottom: 0; margin: 0 0 0 1px; }
.mrows { height: 412px; display: grid; grid-template-rows: repeat(14, 1fr); }
.mrows > div { display: flex; align-items: center; padding: 2px 7px 0; line-height: 26px; min-height: 0; }
.mrows > div:nth-child(even) { background: linear-gradient(#2c3648, #2c3648) 207px 0 / 1px 100% no-repeat #e9eaec; }
.mrows svg { margin-top: 7px; }
.mrows b, .mtotal b { margin-left: auto; font-weight: 700; }
.l1, .l2 { font-weight: 700; letter-spacing: -.008em; }
.l1 span, .l2 span { margin-left: 13px; }
.mrows .l2 { padding-left: 18px; }
.mrows .l3 { padding-left: 58px; letter-spacing: .005em; }
.mrows .l3 b { font-weight: 400; }
.mrows .under30 { letter-spacing: .02em; }
.vegas { letter-spacing: .018em; }
.mtotal { height: 35px; display: flex; align-items: center; padding: 6px 7px 0 37px; font-weight: 700; letter-spacing: -.005em; }

.scroll { margin-left: 229px; width: 10px; height: 472px; background: #f1f1f1; display: flex; flex-direction: column; align-items: center; padding: 12px 0 11px; }
.scroll i { width: 10px; height: 12px; background: #cdcdcd; margin-top: 12px; }
.scroll .dn { margin-top: auto; }

/* filters pane */
.filters { width: 251px; flex: none; border-left: 1px solid #c8c6c4; color: #0a1128; }
.fhead { height: 57px; display: flex; align-items: center; padding: 0 12px 9px 14px; font-size: 19px; font-weight: 600; letter-spacing: -.024em; }
.fhead span { margin-left: 10px; padding-top: 1px; }
.collapse { margin-left: auto; }
.fsearch { margin: 0 15px 5px 10px; height: 39px; border: 1px solid #bdbbb9; border-radius: 2px; display: flex; align-items: center; padding-left: 12px; gap: 17px; letter-spacing: -.042em; font-size: 17px; }
.fsearch span { margin-top: -1px; }
.filters p { border-top: 1px solid #c0bebc; padding: 16px 0 0 10px; font-size: 15px; line-height: 22px; letter-spacing: -.026em; white-space: nowrap; }

/* zoom strip */
.zoombar { height: 29px; flex: none; background: #f3f2f1; border-top: 1px solid #dddbd9; display: flex; align-items: center; padding-left: 1367px; font-size: 15px; color: #5e5c5a; }
.minus { width: 6px; height: 2px; background: #5e5c5a; margin-right: 6px; flex: none; }
.plus { margin: 0 25px 0 7px; }
.zoombar span { width: 49px; margin-top: -2px; letter-spacing: -.023em; }

/* desktop taskbar */
.taskbar { height: 50px; flex: none; display: flex; align-items: center; color: #1b1b1b; background: linear-gradient(90deg, #dddcd6 0, #d9dcce 480px, #e8ddcf 530px, #e9dccd 670px, #dcd2d1 760px, #d6d5dc 840px, #ded5d5 900px, #e3d6d6 1340px, #e8d7ca 1580px, #dfdfd7 1660px, #dbdcda 1800px, #d5e0c3 1914px); }
.start { width: 60px; padding-left: 20px; }
.tsearch { width: 430px; height: 50px; background: #fff; border: 1px solid #c5c5c5; display: flex; align-items: center; padding-left: 14px; font-size: 18px; letter-spacing: -.011em; }
.tsearch span { margin-left: 14px; width: 289px; }
.tb { height: 50px; display: flex; align-items: center; justify-content: center; flex: none; }
.open { border-bottom: 3px solid #0a78d4; padding-top: 3px; }
.cortana { width: 60px; }
.taskview { width: 60px; margin-right: 9px; }
.explorer { width: 51px; margin-right: 6px; padding-right: 2px; }
.browser { width: 61px; padding-right: 2px; background: #f5f0ec; }
.mail { width: 62px; margin: 0 3px; padding-right: 5px; }
.teams { width: 51px; }
.weather { margin-left: 514px; width: 174px; display: flex; align-items: center; font-size: 18px; }
.weather svg { margin-top: -6px; }
.temp { margin-left: 9px; width: 48px; letter-spacing: -.03em; }
.cloudy { letter-spacing: -.026em; }
.tray { width: 181px; display: flex; align-items: center; gap: 10px; }
.tray svg:first-child { margin-right: 6px; }
.lang { width: 44px; font-size: 15px; letter-spacing: -.056em; }
.clock { width: 77px; display: flex; flex-direction: column; align-items: center; font-size: 15px; line-height: 23px; letter-spacing: -.015em; padding-bottom: 1px; }
.time { letter-spacing: -.047em; }
.notify { margin-left: 23px; width: 44px; position: relative; }
.notify em { position: absolute; left: 10px; top: 7px; width: 20px; height: 20px; border: 1.500px solid #888; border-radius: 50%; background: #d4d6d0; font-size: 13px; line-height: 17px; font-weight: 600; text-align: center; }
.peek { width: 1px; height: 50px; background: #a9ad9f; }
```
